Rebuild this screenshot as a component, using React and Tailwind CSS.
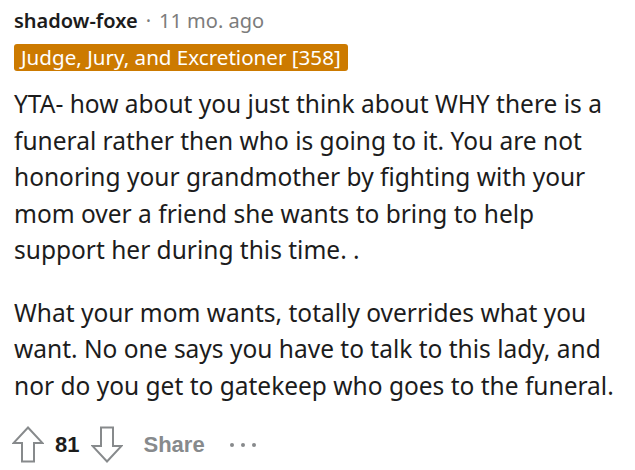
export default function App() {
  return (
    <div className="w-[635px] h-[470px] bg-white pl-[14px] pr-[4px] pt-[6px] overflow-hidden">
      <div className="flex items-center h-[30px] text-[20px] font-['Noto_Sans',sans-serif]">
        <span className="font-semibold text-[#1c1c1c]">shadow-foxe</span>
        <span className="text-[#7c7c7c] mx-[8px]">·</span>
        <span className="text-[#7c7c7c]">11 mo. ago</span>
      </div>
      <div className="mt-[8px]">
        <span className="inline-block bg-[#cc7a00] text-white rounded-[3px] px-[7px] h-[27px] leading-[27px] text-[20.6px] font-['Noto_Sans',sans-serif]">
          Judge, Jury, and Excretioner [358]
        </span>
      </div>
      <div className="mt-[15px] text-[24.5px] leading-[36.5px] text-[#1c1c1c] font-['Noto_Sans',sans-serif]">
        <p>
          YTA- how about you just think about WHY there is a funeral rather then who is going to it. You are not honoring your grandmother by fighting with your mom over a friend she wants to bring to help support her during this time. .
        </p>
        <p className="mt-[26px]">
          What your mom wants, totally overrides what you want. No one says you have to talk to this lady, and nor do you get to gatekeep who goes to the funeral.
        </p>
      </div>
      <div className="flex items-center mt-[22px] font-['Liberation_Sans',sans-serif]">
        <svg width="32" height="37" viewBox="0 0 32 37" className="-ml-[2px]">
          <path d="M16 1.5 L30.5 17 L22 17 L22 35.5 L10 35.5 L10 17 L1.5 17 Z" fill="none" stroke="#878a8c" strokeWidth="2" strokeLinejoin="miter" />
        </svg>
        <span className="ml-[11px] text-[22px] font-bold text-[#1c1c1c]">81</span>
        <svg width="32" height="37" viewBox="0 0 32 37" className="ml-[12px]">
          <path d="M16 35.5 L30.5 20 L22 20 L22 1.5 L10 1.5 L10 20 L1.5 20 Z" fill="none" stroke="#878a8c" strokeWidth="2" strokeLinejoin="miter" />
        </svg>
        <span className="ml-[20px] text-[22px] font-bold text-[#878a8c]">Share</span>
        <span className="ml-[25px] flex gap-[7px]">
          <span className="w-[4px] h-[4px] rounded-full bg-[#878a8c]" />
          <span className="w-[4px] h-[4px] rounded-full bg-[#878a8c]" />
          <span className="w-[4px] h-[4px] rounded-full bg-[#878a8c]" />
        </span>
      </div>
    </div>
  );
}
